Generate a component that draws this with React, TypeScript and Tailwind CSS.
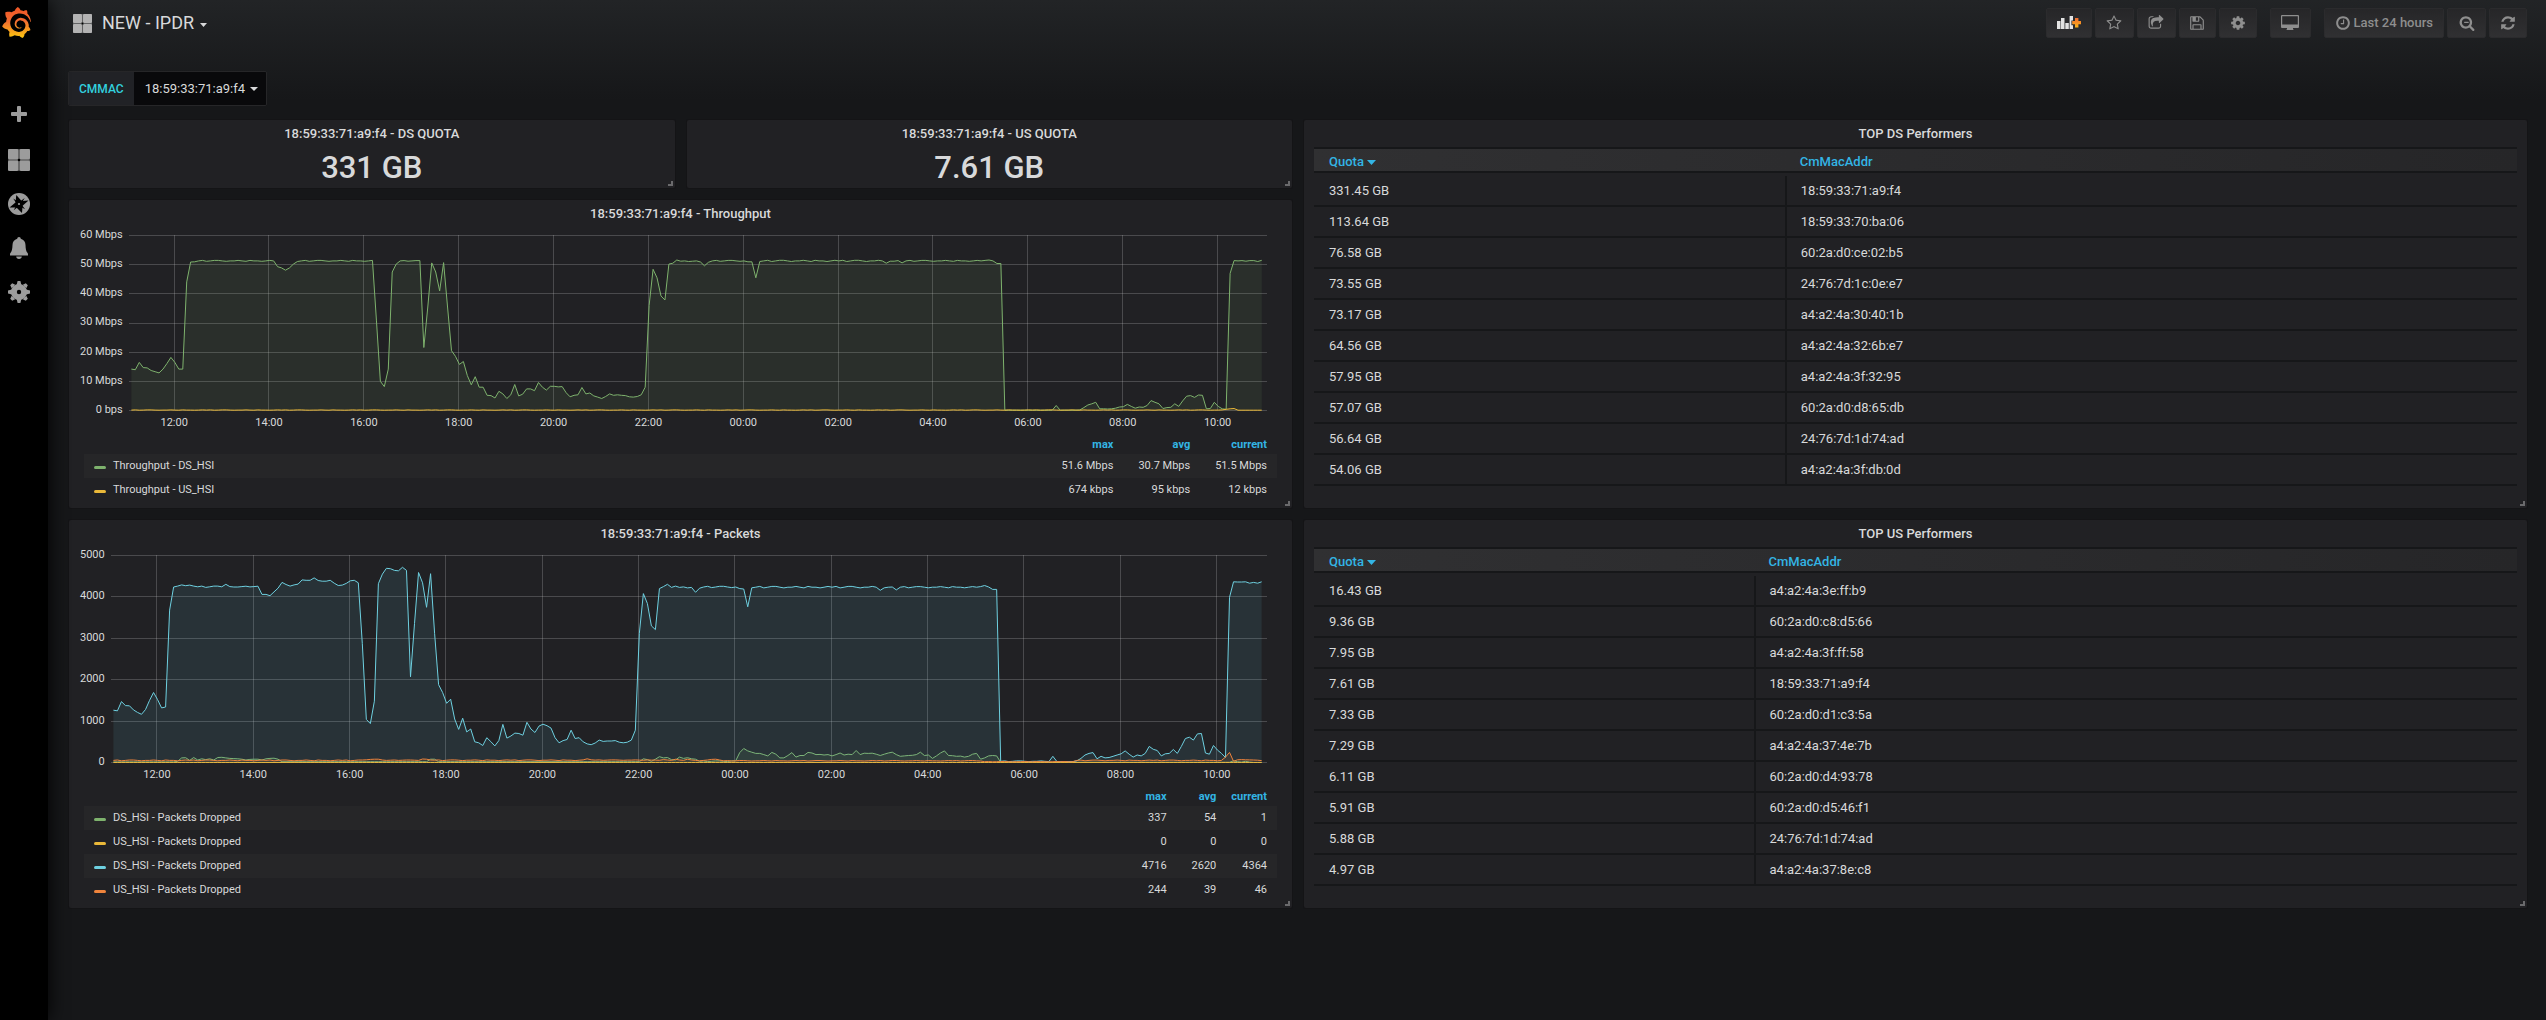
import type { ReactNode } from "react";
import { SiGrafana } from "react-icons/si";

const GREEN = "#7eb26d";
const YELLOW = "#eab839";
const CYAN = "#6ed0e0";
const ORANGE = "#ef843c";

const SAMPLE_MINUTES = 5;
const DAY_MINUTES = 1440;
const FIRST_SAMPLE = 3;
const FIRST_TICK = 57;
const SAMPLES = 287;

const HOURS = [
  "12:00",
  "14:00",
  "16:00",
  "18:00",
  "20:00",
  "22:00",
  "00:00",
  "02:00",
  "04:00",
  "06:00",
  "08:00",
  "10:00",
];

const WOBBLE = [0, 1, -1, 0, 1, 1, 0, -1, 0, 0, 1, 0, -1, 1, 0, 0, -1, 0, 1];

// n samples that hover around one level
function level(n: number, base: number, jitter = 0) {
  return Array.from({ length: n }, (_, i) => base + WOBBLE[i % WOBBLE.length] * jitter);
}

const DS_THROUGHPUT = [
  14.2, 14, 16.5, 14.7, 14.6, 13.7, 13.3, 12.9, 14.2, 16.1, 18.2, 16.5, 14.2, 14.2, 44.1, 50.9, 51,
  ...level(20, 51.3, 0.15),
  49.3, 48.9, 48.1, 48.9, 50.2, 51.1,
  ...level(19, 51.3, 0.15),
  31, 10, 8.2, 14.2, 47.5, 50.2,
  ...level(6, 51.3, 0.1),
  21.6, 35.5, 50.6, 47.5, 41, 50.7, 35.5, 20.5, 18.6, 15.8, 16.8, 12, 8.8, 11.6, 8, 8, 5.2, 5.1,
  4.3, 6.6, 5.7, 4.1, 5.4, 8.9, 5, 5.6, 7.4, 7.4, 6.8, 9.6, 8, 7, 8.3, 8.3, 8.1, 8.2, 6.1, 4.7,
  5.2, 5.4, 7.9, 5.7, 6, 5, 4.6, 4.1, 4.8, 5.7, 5.2, 5.4, 5.2, 5.1, 4.7, 4.6, 4.8, 5.4, 8, 36,
  48.4, 45.5, 39.3, 37.9, 50.2, 50.5, 51.6,
  ...level(5, 51.2, 0.1),
  50.9, 49.6, 50.8,
  ...level(9, 51.3, 0.15),
  51, 51, 45.5, 51.1,
  ...level(31, 51.3, 0.2),
  50.5, 51.2, 51.2, 51.4, 50.6,
  ...level(21, 51.3, 0.15),
  51.6, 51.3, 50.4, 50.4,
  ...level(13, 0.1),
  1.7,
  ...level(5, 0.1),
  0.2, 1, 1.9, 2.3, 2.8, 0.6, 0.6, 0.5, 0.6, 0.8, 1.2, 1.3, 2.1, 1.4, 0.8, 1.2, 1.1, 1.7, 3.4, 2.8,
  2.3, 0.7, 1, 1.1, 2.3, 1.4, 3.3, 4.9, 5.1, 4.5, 5.3, 5.2, 0.6, 0.7, 2.8, 1.4, 0.6, 0.4, 47, 51.4,
  51.3, 51.4, 51.2, 51.4, 51.4, 51.1, 51.5,
];

const US_THROUGHPUT = [...level(277, 0.15, 0.05), 0.4, 0.6, 0.7, ...level(7, 0.1)];

const DS_PACKETS = [
  1264, 1250, 1470, 1375, 1370, 1270, 1210, 1165, 1280, 1500, 1690, 1520, 1320, 1340, 3680, 4240,
  4260, 4290, 4270, 4285, 4260,
  ...level(7, 4245, 15),
  4305, 4250, 4240, 4240,
  ...level(5, 4250, 8),
  4060, 4060, 4030, 4120, 4210, 4350, 4300, 4260, 4290, 4310, 4410, 4400, 4400, 4460, 4395, 4380,
  4380, 4400, 4330, 4275, 4285, 4325, 4390, 4400, 4340, 2870, 1040, 940, 1480, 4320, 4550, 4690,
  4680, 4640, 4630, 4716, 4640, 2070, 3360, 4590, 4340, 3750, 4560, 3120, 1880, 1690, 1430, 1530,
  1050, 800, 1070, 740, 810, 500, 475, 410, 600, 505, 400, 530, 920, 590, 640, 710, 700, 660, 970,
  810, 725, 880, 925, 890, 830, 600, 475, 530, 555, 780, 580, 600, 500, 450, 430, 470, 540, 510,
  520, 520, 530, 490, 475, 490, 540, 780, 3120, 4080, 3840, 3300, 3210, 4200, 4250, 4305, 4230,
  4260,
  ...level(4, 4230, 12),
  4110, 4210,
  ...level(9, 4240, 15),
  4200, 4190, 3760, 4220,
  ...level(31, 4235, 18),
  4160, 4220, 4235, 4240, 4170,
  ...level(21, 4235, 15),
  4275, 4240, 4180, 4180,
  ...level(13, 30, 8),
  150,
  ...level(5, 25),
  40, 100, 180, 220, 240, 90, 150, 110, 120, 150, 180, 210, 280, 200, 130, 180, 160, 220, 390, 320,
  290, 160, 210, 220, 315, 220, 390, 580, 610, 540, 690, 700, 230, 200, 410, 300, 220, 120, 3990,
  4365, 4360, 4360, 4365, 4330, 4350, 4330, 4364,
];

const DS_DROPPED = [
  ...level(16, 15),
  30, 110, 115, 50, 120, 60, 90, 70, 90, 60, 120, 125, 110, 100, 95, 90, 80, 60, 75, 80, 80, 60, 90,
  100, 105, 80,
  ...level(37, 20),
  80, 80,
  ...level(51, 20),
  90, 70, 30, 80, 140, 110, 120, 70, 60, 130, 100, 115, 90, 80,
  ...level(8, 30, 8),
  40, 40, 240, 337, 280, 250, 220, 220, 190, 160, 245, 200, 110, 110, 170, 240, 130, 170, 170, 245,
  230, 190, 195, 180, 190, 160, 190, 230, 180, 200, 190, 290, 190, 225, 220, 225, 200, 170, 200,
  230, 250, 190, 150, 160, 170, 175, 190, 250, 170, 180, 100, 160, 230, 280, 170, 165, 150, 155,
  130, 150, 200, 220, 80, 110, 160, 170, 160,
  ...level(58, 5),
  40, 20, 10, 30, 10, 1, 1, 1,
];

const US_DROPPED = level(SAMPLES, 0);

const US_PACKETS = [
  ...level(62, 50, 10),
  60, 65, 75, 80, 80, 60, 50,
  ...level(8, 55, 5),
  85, 80, 60,
  ...level(38, 55, 8),
  90, 65,
  ...level(17, 58, 5),
  70, 60, 50, 80, 60, 50, 80, 60, 50, 40, 50, 60, 75, 80, 60,
  ...level(65, 42, 6),
  ...level(23, 20, 3),
  ...level(37, 50, 8),
  130, 244, 30, 65, 70, 66, 64, 60, 55, 46,
];

type Series = { name: string; color: string; data: number[]; stats: string[] };

const THROUGHPUT: Series[] = [
  {
    name: "Throughput - DS_HSI",
    color: GREEN,
    data: DS_THROUGHPUT,
    stats: ["51.6 Mbps", "30.7 Mbps", "51.5 Mbps"],
  },
  {
    name: "Throughput - US_HSI",
    color: YELLOW,
    data: US_THROUGHPUT,
    stats: ["674 kbps", "95 kbps", "12 kbps"],
  },
];

const PACKETS: Series[] = [
  { name: "DS_HSI - Packets Dropped", color: GREEN, data: DS_DROPPED, stats: ["337", "54", "1"] },
  { name: "US_HSI - Packets Dropped", color: YELLOW, data: US_DROPPED, stats: ["0", "0", "0"] },
  {
    name: "DS_HSI - Packets Dropped",
    color: CYAN,
    data: DS_PACKETS,
    stats: ["4716", "2620", "4364"],
  },
  { name: "US_HSI - Packets Dropped", color: ORANGE, data: US_PACKETS, stats: ["244", "39", "46"] },
];

const TOP_DS = [
  ["331.45 GB", "18:59:33:71:a9:f4"],
  ["113.64 GB", "18:59:33:70:ba:06"],
  ["76.58 GB", "60:2a:d0:ce:02:b5"],
  ["73.55 GB", "24:76:7d:1c:0e:e7"],
  ["73.17 GB", "a4:a2:4a:30:40:1b"],
  ["64.56 GB", "a4:a2:4a:32:6b:e7"],
  ["57.95 GB", "a4:a2:4a:3f:32:95"],
  ["57.07 GB", "60:2a:d0:d8:65:db"],
  ["56.64 GB", "24:76:7d:1d:74:ad"],
  ["54.06 GB", "a4:a2:4a:3f:db:0d"],
];

const TOP_US = [
  ["16.43 GB", "a4:a2:4a:3e:ff:b9"],
  ["9.36 GB", "60:2a:d0:c8:d5:66"],
  ["7.95 GB", "a4:a2:4a:3f:ff:58"],
  ["7.61 GB", "18:59:33:71:a9:f4"],
  ["7.33 GB", "60:2a:d0:d1:c3:5a"],
  ["7.29 GB", "a4:a2:4a:37:4e:7b"],
  ["6.11 GB", "60:2a:d0:d4:93:78"],
  ["5.91 GB", "60:2a:d0:d5:46:f1"],
  ["5.88 GB", "24:76:7d:1d:74:ad"],
  ["4.97 GB", "a4:a2:4a:37:8e:c8"],
];

const ICON_PATHS = {
  star: "M1201 1004l306-297-422-62-189-382-189 382-422 62 306 297-73 421 378-199 377 199zm527-357q0 22-26 48l-363 354 86 500q1 7 1 20 0 50-41 50-19 0-40-12l-449-236-449 236q-22 12-40 12-21 0-31.500-14.500t-10.500-35.500q0-6 2-20l86-500-364-354q-25-27-25-48 0-37 56-46l502-73 225-455q19-41 49-41t49 41l225 455 502 73q56 9 56 46z",
  share:
    "M1472 989v259q0 119-84.500 203.500t-203.500 84.500h-832q-119 0-203.500-84.500t-84.500-203.500v-832q0-119 84.500-203.500t203.500-84.500h255q13 0 22.500 9.500t9.500 22.500q0 27-26 32-77 26-133 60-10 4-16 4h-112q-66 0-113 47t-47 113v832q0 66 47 113t113 47h832q66 0 113-47t47-113v-214q0-19 18-29 28-13 54-37 16-16 35-8 21 9 21 29zm237-496l-384 384q-18 19-45 19-12 0-25-5-39-17-39-59v-192h-160q-323 0-438 131-119 137-74 473 3 23-20 34-8 2-12 2-16 0-26-13-10-14-21-31t-39.500-68.500-49.500-99.500-38.500-114-17.500-122q0-49 3.500-91t14-90 28-88 47-81.500 68.500-74 94.500-61.500 124.500-48.500 159.500-30.500 196.500-11h160v-192q0-42 39-59 13-5 25-5 26 0 45 19l384 384q19 19 19 45t-19 45z",
  save: "M512 1536h768v-384h-768v384zm896 0h128v-896q0-14-10-38.500t-20-34.500l-281-281q-10-10-34-20t-39-10v416q0 40-28 68t-68 28h-576q-40 0-68-28t-28-68v-416h-128v1280h128v-416q0-40 28-68t68-28h832q40 0 68 28t28 68v416zm-384-928v-320q0-13-9.500-22.500t-22.500-9.500h-192q-13 0-22.500 9.500t-9.500 22.500v320q0 13 9.500 22.500t22.500 9.500h192q13 0 22.500-9.500t9.500-22.500zm640 32v928q0 40-28 68t-68 28h-1344q-40 0-68-28t-28-68v-1344q0-40 28-68t68-28h928q40 0 88 20t76 48l280 280q28 28 48 76t20 88z",
  cog: "M1152 896q0-106-75-181t-181-75-181 75-75 181 75 181 181 75 181-75 75-181zm512-109v222q0 12-8 23t-20 13l-185 28q-19 54-39 91 35 50 107 138 10 12 10 25t-9 23q-27 37-99 108t-94 71q-12 0-26-9l-138-108q-44 23-91 38-16 136-29 186-7 28-36 28h-222q-14 0-24.500-8.500t-11.500-21.500l-28-184q-49-16-90-37l-141 107q-10 9-25 9-14 0-25-11-126-114-165-168-7-10-7-23 0-12 8-23 15-21 51-66.500t54-70.500q-27-50-41-99l-183-27q-13-2-21-12.500t-8-23.500v-222q0-12 8-23t19-13l186-28q14-46 39-92-40-57-107-138-10-12-10-24 0-10 9-23 26-36 98.500-107.500t94.500-71.500q13 0 26 10l138 107q44-23 91-38 16-136 29-186 7-28 36-28h222q14 0 24.500 8.500t11.500 21.500l28 184q49 16 90 37l142-107q9-9 24-9 13 0 25 10 129 119 165 170 7 8 7 22 0 12-8 23-15 21-51 66.500t-54 70.500q26 50 41 98l183 28q13 2 21 12.500t8 23.500z",
  clock:
    "M1024 544v448q0 14-9 23t-23 9h-320q-14 0-23-9t-9-23v-64q0-14 9-23t23-9h224v-352q0-14 9-23t23-9h64q14 0 23 9t9 23zm416 352q0-148-73-273t-198-198-273-73-273 73-198 198-73 273 73 273 198 198 273 73 273-73 198-198 73-273zm224 0q0 209-103 385.500t-279.500 279.500-385.500 103-385.500-103-279.500-279.500-103-385.500 103-385.500 279.500-279.500 385.500-103 385.500 103 279.500 279.500 103 385.500z",
  zoomOut:
    "M1088 800v64q0 13-9.500 22.500t-22.500 9.500h-448q-13 0-22.500-9.500t-9.500-22.500v-64q0-13 9.500-22.500t22.500-9.500h448q13 0 22.500 9.500t9.500 22.500zm128 32q0-185-131.500-316.500t-316.500-131.500-316.500 131.500-131.500 316.500 131.500 316.500 316.500 131.500 316.500-131.500 131.500-316.500zm512 832q0 53-37.500 90.500t-90.500 37.500q-54 0-90-38l-343-342q-179 124-399 124-143 0-273.500-55.500t-225-150-150-225-55.500-273.500 55.500-273.500 150-225 225-150 273.500-55.500 273.500 55.500 225 150 150 225 55.500 273.500q0 220-124 399l343 343q37 37 37 90z",
  refresh:
    "M1639 1056q0 5-1 7-64 268-268 434.500t-478 166.500q-146 0-282.500-55t-243.500-157l-129 129q-19 19-45 19t-45-19-19-45v-448q0-26 19-45t45-19h448q26 0 45 19t19 45-19 45l-137 137q71 66 161 102t187 36q134 0 250-65t186-179q11-17 53-117 8-23 30-23h192q13 0 22.500 9.500t9.500 22.500zm25-800v448q0 26-19 45t-45 19h-448q-26 0-45-19t-19-45 19-45l138-138q-148-137-349-137-134 0-250 65t-186 179q-11 17-53 117-8 23-30 23h-199q-13 0-22.500-9.500t-9.500-22.500v-7q65-268 270-434.500t480-166.500q146 0 284 55.500t245 156.500l130-129q19-19 45-19t45 19 19 45z",
};

function Glyph({ name }: { name: keyof typeof ICON_PATHS }) {
  return (
    <svg viewBox="0 0 1792 1792" className="size-4" fill="currentColor" aria-hidden="true">
      <path d={ICON_PATHS[name]} />
    </svg>
  );
}

function Caret({ className }: { className: string }) {
  return (
    <svg
      viewBox="0 0 8 4"
      preserveAspectRatio="none"
      className={className}
      fill="currentColor"
      aria-hidden="true"
    >
      <path d="M0 0h8l-4 4z" />
    </svg>
  );
}

function GridIcon({ className }: { className: string }) {
  return (
    <svg viewBox="0 0 22 22" className={className} fill="currentColor" aria-hidden="true">
      <path d="M0 0H22V22H0z" opacity="0.45" />
      <rect width="10.4" height="10.4" rx="1.4" />
      <rect x="11.6" width="10.4" height="10.4" rx="1.4" />
      <rect y="11.6" width="10.4" height="10.4" rx="1.4" />
      <rect x="11.6" y="11.6" width="10.4" height="10.4" rx="1.4" />
      <rect x="10" y="10" width="2" height="2" fill="#000" />
    </svg>
  );
}

function AddPanelIcon() {
  return (
    <svg viewBox="0 0 24 14" className="h-3.5 w-6" aria-hidden="true">
      <g fill="#e3e3e3">
        <path d="M0 5h3.500v8H0zM4 2h3.500v11H4zM8.300 7h3.500v6H8.300z" />
        <path d="M12.600 0h3.400v4.400h-1.600v4.800h1.600V13h-3.400z" />
      </g>
      <path d="M18 2h3.400v3H24v3.200h-2.600v3.200H18V8.200h-2.800V5H18z" fill="url(#plus-fire)" />
      <linearGradient id="plus-fire" x1="0" y1="0" x2="0" y2="1">
        <stop offset="0" stopColor="#f26b31" />
        <stop offset="1" stopColor="#fcb416" />
      </linearGradient>
    </svg>
  );
}

function MonitorIcon() {
  return (
    <svg viewBox="0 0 18 16" className="h-4 w-[18px]" fill="currentColor" aria-hidden="true">
      <path
        fillRule="evenodd"
        d="M1 0h16a1 1 0 0 1 1 1v11a1 1 0 0 1-1 1h-5v1.200h.5V15h-7v-.8H6V13H1a1 1 0 0 1-1-1V1a1 1 0 0 1 1-1zM1.200 1.200v8.300h15.600V1.200z"
      />
    </svg>
  );
}

const SIDE_ITEMS: { label: string; icon: ReactNode }[] = [
  {
    label: "Create",
    icon: (
      <svg viewBox="0 0 22 22" className="size-[22px]" fill="currentColor">
        <path d="M10 3h2a1 1 0 0 1 1 1v5h5a1 1 0 0 1 1 1v2a1 1 0 0 1-1 1h-5v5a1 1 0 0 1-1 1h-2a1 1 0 0 1-1-1v-5H4a1 1 0 0 1-1-1v-2a1 1 0 0 1 1-1h5V4a1 1 0 0 1 1-1z" />
      </svg>
    ),
  },
  { label: "Dashboards", icon: <GridIcon className="size-[22px]" /> },
  {
    label: "Explore",
    icon: (
      <svg viewBox="0 0 22 22" className="size-[22px]">
        <circle cx="11" cy="11" r="11" fill="currentColor" />
        <path d="M8.300 2L13.600 8 20.500 7.600 14.600 12.800 14 20 8.500 14.500 1.500 14.500 7.500 9.500z" fill="#000" />
        <path d="M5.200 5.400L11 9.200l5.700-4.300-3.600 6 4 5.400-6-3.200-5.400 4.200 3.300-6z" fill="#000" />
        <circle cx="11" cy="11" r="1.100" fill="currentColor" />
      </svg>
    ),
  },
  {
    label: "Alerting",
    icon: (
      <svg viewBox="0 0 22 22" className="size-[22px]" fill="currentColor">
        <path d="M11 0a1.800 1.800 0 0 1 1.800 1.800C15.800 2.600 17.400 5 17.500 8c.1 3.600.6 6.300 1.900 7.800.5.600.6 1.100.6 1.700v.9H2v-.9c0-.6.100-1.100.6-1.700C3.900 14.300 4.400 11.600 4.500 8c.1-3 1.700-5.400 4.700-6.200A1.800 1.800 0 0 1 11 0zM8.200 19.600h5.600c0 1.400-1.200 2.400-2.800 2.400s-2.800-1-2.800-2.400z" />
      </svg>
    ),
  },
  {
    label: "Configuration",
    icon: (
      <svg viewBox="0 0 22 22" className="size-[22px]" fill="currentColor">
        <circle cx="11" cy="11" r="8" />
        <path d="M8.600 4L9.600 0h2.800l1 4zM8.600 18l1 4h2.800l1-4zM4 8.600L0 9.600v2.800l4 1zM18 8.600l4 1v2.800l-4 1z" />
        <path d="M3.700 7.200L2.200 4.200l2-2 3 1.500zM14.800 3.700l3-1.500 2 2-1.500 3zM3.700 14.800l-1.500 3 2 2 3-1.500zM14.800 18.300l3 1.500 2-2-1.500-3z" />
        <circle cx="11" cy="11" r="2.200" fill="#000" />
      </svg>
    ),
  },
];

function SideMenu() {
  return (
    <aside className="z-10 flex w-12 shrink-0 flex-col bg-black shadow-[0_0_20px_#000]">
      <a href="#home" aria-label="Home" className="mt-[7px] ml-px block">
        <svg className="absolute size-0" aria-hidden="true">
          <linearGradient id="logo-fire" x1="0" y1="0" x2="0" y2="1">
            <stop offset="0.1" stopColor="#f05a28" />
            <stop offset="0.45" stopColor="#f26b31" />
            <stop offset="1" stopColor="#fcc70f" />
          </linearGradient>
        </svg>
        <SiGrafana className="size-[31px]" fill="url(#logo-fire)" />
      </a>
      <nav className="mt-[65px] ml-2 flex flex-col gap-[22px] text-[#9c9c9c]">
        {SIDE_ITEMS.map((item) => (
          <a
            key={item.label}
            href={`#${item.label.toLowerCase()}`}
            aria-label={item.label}
            className="first:pb-0.5"
          >
            {item.icon}
          </a>
        ))}
      </nav>
    </aside>
  );
}

function ToolButton({
  label,
  className,
  children,
}: {
  label: string;
  className: string;
  children: ReactNode;
}) {
  return (
    <button
      type="button"
      aria-label={label}
      className={`flex h-[30px] items-center justify-center rounded-xs border border-[#2b2b2d] bg-linear-to-b from-[#262628] to-[#303032] text-[#8e8e8e] ${className}`}
    >
      {children}
    </button>
  );
}

function Toolbar() {
  return (
    <header className="flex h-[46px] items-center justify-between">
      <button type="button" className="flex items-center text-lg text-[#d8d9da]">
        <GridIcon className="ml-[5px] size-[19px] text-[#b3b3b3]" />
        <span className="ml-2.5">NEW - IPDR</span>
        <Caret className="mt-1 ml-1.5 h-1 w-[7px]" />
      </button>

      <div className="flex gap-[13px]">
        <div className="flex gap-[3px]">
          <ToolButton label="Add panel" className="w-[46px]">
            <AddPanelIcon />
          </ToolButton>
          <ToolButton label="Mark as favorite" className="w-[39px]">
            <Glyph name="star" />
          </ToolButton>
          <ToolButton label="Share dashboard" className="w-[39px]">
            <Glyph name="share" />
          </ToolButton>
          <ToolButton label="Save dashboard" className="w-[37px]">
            <Glyph name="save" />
          </ToolButton>
          <ToolButton label="Dashboard settings" className="w-[38px]">
            <Glyph name="cog" />
          </ToolButton>
        </div>
        <ToolButton label="Cycle view mode" className="w-[41px]">
          <MonitorIcon />
        </ToolButton>
        <div className="flex gap-[3px]">
          <ToolButton label="Last 24 hours" className="gap-[3px] px-2.5 text-[13px] font-medium">
            <Glyph name="clock" />
            Last 24 hours
          </ToolButton>
          <ToolButton label="Zoom out" className="w-[39px]">
            <Glyph name="zoomOut" />
          </ToolButton>
          <ToolButton label="Refresh" className="w-[38px]">
            <Glyph name="refresh" />
          </ToolButton>
        </div>
      </div>
    </header>
  );
}

function VariableSelect() {
  return (
    <div className="mt-[25px] flex h-[35px] w-fit items-stretch overflow-hidden rounded-xs border border-[#262628] text-[13px]">
      <label
        htmlFor="cmmac"
        className="flex items-center bg-[#212226] px-2.5 text-xs font-medium text-[#32d1df]"
      >
        CMMAC
      </label>
      <div className="flex items-center bg-[#09090b] pr-2 pl-[11px]">
        <select id="cmmac" className="appearance-none bg-transparent text-[#d8d9da]">
          <option>18:59:33:71:a9:f4</option>
        </select>
        <Caret className="ml-1 h-1 w-2" />
      </div>
    </div>
  );
}

function Panel({ title, children }: { title: string; children: ReactNode }) {
  return (
    <section className="relative flex-1 rounded-xs bg-[#212124] shadow-[0_0_0_1px_#141416]">
      <h2 className="h-[27px] text-center text-[13px] leading-[27px] font-medium">{title}</h2>
      {children}
      <span className="absolute right-0.5 bottom-0.5 size-[5px] border-r-2 border-b-2 border-[#6a6a6c]" />
    </section>
  );
}

function StatPanel({ title, value }: { title: string; value: string }) {
  return (
    <Panel title={title}>
      <p className="h-[41px] text-center text-[31px] leading-[41px] font-medium">{value}</p>
    </Panel>
  );
}

function Chart({
  series,
  ticks,
  max,
  height,
  plotClass,
}: {
  series: Series[];
  ticks: string[];
  max: number;
  height: number;
  plotClass: string;
}) {
  const y = (value: number) => height - (value / max) * height + 0.5;
  const x = (i: number) => FIRST_SAMPLE + i * SAMPLE_MINUTES;

  return (
    <div className="mt-2 flex gap-1.5 pr-[25px] pl-[11px] text-[11px] leading-3">
      <div className={`-mt-[7px] box-content flex flex-col justify-between pb-3 text-right ${plotClass}`}>
        {ticks.map((tick) => (
          <span key={tick} className="h-0 leading-[14px]">
            {tick}
          </span>
        ))}
      </div>
      <div className="min-w-0 flex-1">
        <svg
          viewBox={`0 0 ${DAY_MINUTES} ${height}`}
          preserveAspectRatio="none"
          className={`block w-full overflow-visible ${plotClass}`}
          role="img"
          aria-label={series[0].name}
        >
          <g stroke="#c8c8c8" strokeOpacity="0.25" shapeRendering="crispEdges">
            {ticks.map((tick, i) => {
              const at = (i * height) / (ticks.length - 1) + 0.5;
              return (
                <line key={tick} x2={DAY_MINUTES} y1={at} y2={at} vectorEffect="non-scaling-stroke" />
              );
            })}
            {HOURS.map((hour, i) => {
              const at = FIRST_TICK + i * 120;
              return (
                <line key={hour} x1={at} x2={at} y2={height} vectorEffect="non-scaling-stroke" />
              );
            })}
          </g>
          {series.map((s, n) => {
            const line = s.data.map((value, i) => `${x(i)},${y(value).toFixed(1)}`).join(" ");
            const floor = `${x(s.data.length - 1)},${y(0)} ${x(0)},${y(0)}`;
            return (
              <g key={n}>
                <polygon points={`${line} ${floor}`} fill={s.color} fillOpacity="0.1" />
                <polyline
                  points={line}
                  fill="none"
                  stroke={s.color}
                  strokeWidth="1"
                  vectorEffect="non-scaling-stroke"
                />
              </g>
            );
          })}
        </svg>
        <div className="mt-[7px] mr-0.5 -ml-0.5 flex text-center">
          {HOURS.map((hour) => (
            <span key={hour} className="flex-1">
              {hour}
            </span>
          ))}
        </div>
      </div>
    </div>
  );
}

function Legend({ series }: { series: Series[] }) {
  return (
    <div className="mt-[7px] px-[15px] pb-1.5">
      <table className="w-full text-[11px] leading-3">
        <thead className="text-right text-[#33b5e5]">
          <tr className="h-[18px]">
            <th className="w-full" aria-label="series" />
            {["max", "avg", "current"].map((stat) => (
              <th key={stat} className="pr-2.5 pl-[5px] text-right font-bold">
                {stat}
              </th>
            ))}
          </tr>
        </thead>
        <tbody>
          {series.map((s, i) => (
            <tr key={i} className="h-6 odd:bg-[#262628]">
              <td className="pl-2.5">
                <span className="flex items-center gap-[7px]">
                  <span
                    className="mt-[3px] h-[3px] w-3 rounded-xs"
                    style={{ backgroundColor: s.color }}
                  />
                  {s.name}
                </span>
              </td>
              {s.stats.map((stat, n) => (
                <td key={n} className="pr-2.5 pl-[15px] text-right whitespace-nowrap">
                  {stat}
                </td>
              ))}
            </tr>
          ))}
        </tbody>
      </table>
    </div>
  );
}

function TablePanel({
  title,
  rows,
  quotaClass,
}: {
  title: string;
  rows: string[][];
  quotaClass: string;
}) {
  return (
    <Panel title={title}>
      <div className="px-2.5">
        <table className="w-full table-fixed border-separate border-spacing-0 text-[13px] leading-[18px]">
          <thead>
            <tr className="h-[26px] bg-linear-to-r from-[#303032] to-[#262628] text-left text-[#33b5e5]">
              <th className={`border-y-2 border-[#161719] pt-1 pl-[15px] font-medium ${quotaClass}`}>
                <span className="flex items-center gap-[3px]">
                  Quota
                  <Caret className="h-[5px] w-[9px]" />
                </span>
              </th>
              <th className="border-y-2 border-[#161719] pt-1 pl-[13px] font-medium">CmMacAddr</th>
            </tr>
          </thead>
          <tbody className="before:block before:h-[3px] before:content-['']">
            {rows.map(([quota, mac]) => (
              <tr key={mac} className="h-[31px]">
                <td className="border-r-2 border-b-2 border-[#161719] pl-[15px]">{quota}</td>
                <td className="border-b-2 border-[#161719] pl-3.5">{mac}</td>
              </tr>
            ))}
          </tbody>
        </table>
      </div>
    </Panel>
  );
}

export default function App() {
  return (
    <div className="flex min-h-screen bg-[#161719] font-[Roboto,sans-serif] text-[#d8d9da]">
      <SideMenu />
      <main className="min-w-0 flex-1 bg-linear-to-b from-[#222426] to-[#161719] to-[100px] pr-[19px] pl-5">
        <Toolbar />
        <VariableSelect />

        <div className="mt-3.5 ml-px grid grid-cols-2 gap-3">
          <div className="flex flex-col gap-3">
            <div className="flex gap-3">
              <StatPanel title="18:59:33:71:a9:f4 - DS QUOTA" value="331 GB" />
              <StatPanel title="18:59:33:71:a9:f4 - US QUOTA" value="7.61 GB" />
            </div>
            <Panel title="18:59:33:71:a9:f4 - Throughput">
              <Chart
                series={THROUGHPUT}
                ticks={["60 Mbps", "50 Mbps", "40 Mbps", "30 Mbps", "20 Mbps", "10 Mbps", "0 bps"]}
                max={60}
                height={175}
                plotClass="h-[175px]"
              />
              <Legend series={THROUGHPUT} />
            </Panel>
          </div>
          <TablePanel title="TOP DS Performers" rows={TOP_DS} quotaClass="w-[39.3%]" />

          <Panel title="18:59:33:71:a9:f4 - Packets">
            <Chart
              series={PACKETS}
              ticks={["5000", "4000", "3000", "2000", "1000", "0"]}
              max={5000}
              height={207}
              plotClass="h-[207px]"
            />
            <Legend series={PACKETS} />
          </Panel>
          <TablePanel title="TOP US Performers" rows={TOP_US} quotaClass="w-[36.7%]" />
        </div>
      </main>
    </div>
  );
}
